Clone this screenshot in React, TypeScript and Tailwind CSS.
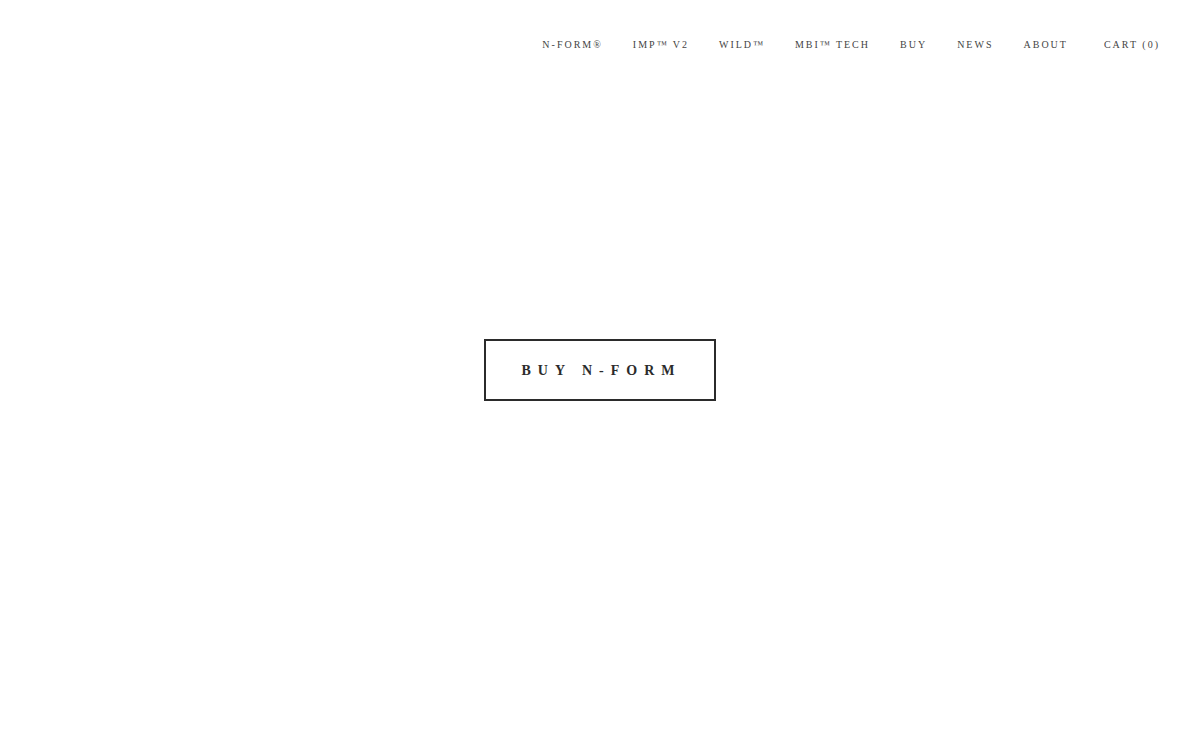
import React from "react";

const links = ["N-FORM®", "IMP™ V2", "WILD™", "MBI™ TECH", "BUY", "NEWS", "ABOUT"];

export default function App() {
  return (
    <div className="h-[750px] w-full bg-white text-[#333] font-['Liberation_Serif',serif]">
      {/* header */}
      <header className="flex items-center justify-end pr-[40px] pt-[39px]">
        <nav className="flex items-center gap-[30px]">
          {links.map((l) => (
            <a key={l} className="text-[10px] leading-[12px] tracking-[2px] text-[#444]">
              {l}
            </a>
          ))}
        </nav>
        <a className="ml-[36px] text-[10px] leading-[12px] tracking-[2px] text-[#444]">CART (0)</a>
      </header>

      {/* hero */}
      <main className="flex justify-center pt-[288px]">
        <button className="flex h-[62px] w-[232px] items-center justify-center border-2 border-[#2b2b2b] pl-[3px] text-[14px] font-bold tracking-[7px] text-[#2b2b2b]">
          BUY N-FORM
        </button>
      </main>
    </div>
  );
}
